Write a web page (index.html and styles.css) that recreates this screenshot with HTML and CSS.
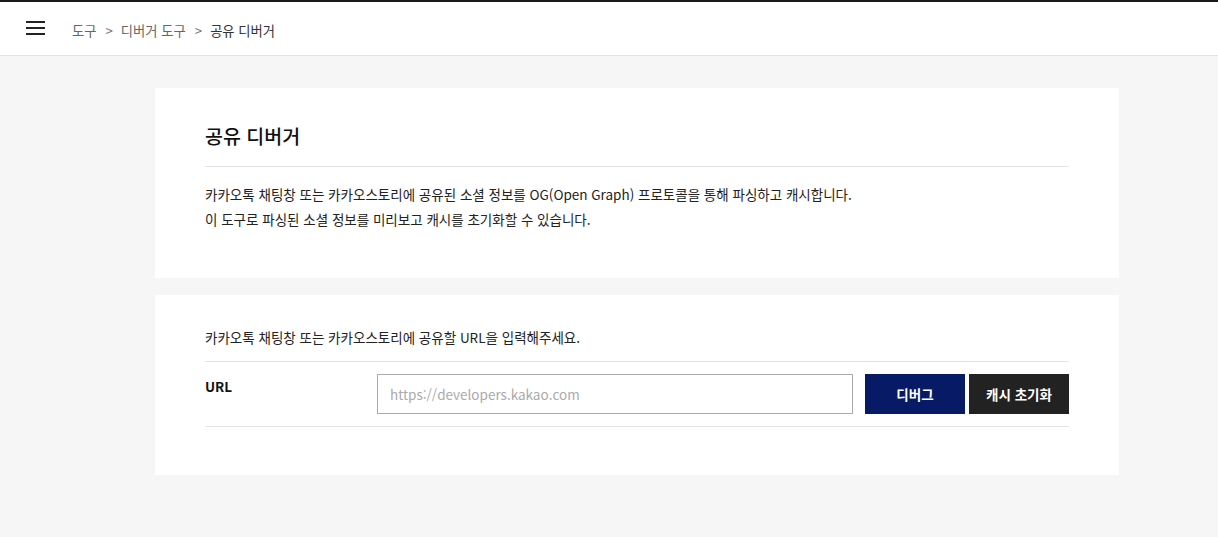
FILE: index.html
```html
<!DOCTYPE html>
<html lang="ko">
<head>
<meta charset="utf-8">
<title>공유 디버거</title>
<link rel="stylesheet" href="styles.css">
</head>
<body>
<header class="topbar">
  <button class="menu" aria-label="menu">
    <svg width="20" height="16" viewBox="0 0 20 16"><rect x="0" y="1" width="19" height="2" fill="#222"/><rect x="0" y="7" width="19" height="2" fill="#222"/><rect x="0" y="13" width="19" height="2" fill="#222"/></svg>
  </button>
  <nav class="crumbs">
    <span class="crumb">도구</span>
    <span class="sep">&gt;</span>
    <span class="crumb">디버거 도구</span>
    <span class="sep">&gt;</span>
    <span class="crumb current">공유 디버거</span>
  </nav>
</header>
<main class="main">
  <section class="card intro">
    <h1 class="title">공유 디버거</h1>
    <p class="desc">카카오톡 채팅창 또는 카카오스토리에 공유된 소셜 정보를 OG(Open Graph) 프로토콜을 통해 파싱하고 캐시합니다.<br>이 도구로 파싱된 소셜 정보를 미리보고 캐시를 초기화할 수 있습니다.</p>
  </section>
  <section class="card form">
    <p class="guide">카카오톡 채팅창 또는 카카오스토리에 공유할 URL을 입력해주세요.</p>
    <div class="row">
      <label class="label" for="url">URL</label>
      <input id="url" class="input" type="text" placeholder="https://developers.kakao.com">
      <button class="btn primary">디버그</button>
      <button class="btn dark">캐시 초기화</button>
    </div>
  </section>
</main>
</body>
</html>
```
FILE: styles.css
```css
* { box-sizing: border-box; }
html, body { margin: 0; padding: 0; }
body {
  background: #f5f6f5;
  font-family: "Noto Sans CJK KR", "Noto Sans", sans-serif;
  color: #222;
  border-top: 2px solid #1a1a1a;
  min-height: 537px;
}
.topbar {
  height: 54px;
  background: #fff;
  border-bottom: 1px solid #e3e3e3;
  display: flex;
  align-items: center;
  padding-left: 26px;
}
.menu {
  border: 0;
  background: none;
  padding: 0;
  width: 20px;
  height: 16px;
  display: flex;
  margin-top: -2px;
}
.crumbs {
  margin-left: 26px;
  margin-top: 3px;
  display: flex;
  align-items: center;
  font-size: 13.3px;
  color: #666;
}
.sep { margin: 0 8px 0 9px; color: #777; }
.crumb.current { color: #333; }
.main {
  padding: 32px 99px 40px 155px;
  display: flex;
  flex-direction: column;
  gap: 17px;
}
.card {
  background: #fff;
  padding: 0 50px;
}
.intro { padding-top: 30px; padding-bottom: 46px; }
.title {
  margin: 0;
  font-size: 19.5px;
  font-weight: 500;
  line-height: 36px;
  padding-bottom: 12px;
  border-bottom: 1px solid #e3e3e3;
  color: #111;
}
.desc {
  margin: 15px 0 0;
  font-size: 13.5px;
  line-height: 25px;
  color: #222;
}
.form { padding-top: 30px; padding-bottom: 48px; }
.guide {
  margin: 0;
  font-size: 13.5px;
  line-height: 25px;
  padding-bottom: 11px;
  border-bottom: 1px solid #e3e3e3;
}
.row {
  display: flex;
  align-items: flex-start;
  padding: 12px 0;
  border-bottom: 1px solid #e3e3e3;
}
.label {
  flex: 0 0 172px;
  font-size: 13.5px;
  font-weight: 700;
  line-height: 25px;
  color: #111;
}
.input {
  flex: 0 0 476px;
  height: 40px;
  border: 1px solid #aaa;
  padding: 0 12px;
  font-family: "Noto Sans CJK KR", "Noto Sans", sans-serif;
  font-size: 13.5px;
  color: #333;
  margin-right: 12px;
  outline: none;
}
.input::placeholder { color: #aaa; }
.btn {
  flex: 0 0 100px;
  height: 40px;
  border: 0;
  color: #fff;
  font-family: "Noto Sans CJK KR", "Noto Sans", sans-serif;
  font-size: 13.5px;
  font-weight: 700;
  padding: 0;
}
.primary { background: #061a66; margin-right: 4px; }
.dark { background: #222; }
```
